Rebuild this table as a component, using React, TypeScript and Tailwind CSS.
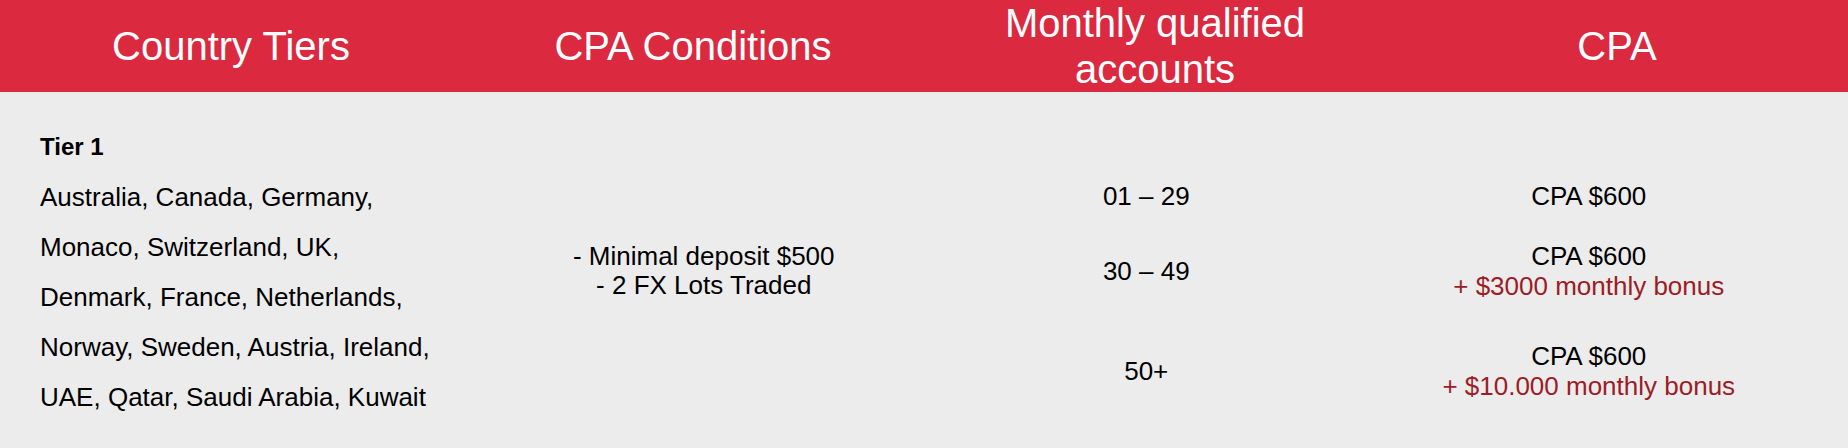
import React from 'react';

const headers: React.ReactNode[] = [
  'Country Tiers',
  'CPA Conditions',
  <>Monthly qualified<br />accounts</>,
  'CPA',
];

const countryLines = [
  'Australia, Canada, Germany,',
  'Monaco, Switzerland, UK,',
  'Denmark, France, Netherlands,',
  'Norway, Sweden, Austria, Ireland,',
  'UAE, Qatar, Saudi Arabia, Kuwait',
];

interface PayoutRow {
  accounts: string;
  cpa: string;
  bonus?: string;
  rowClass: string;
}

const payoutRows: PayoutRow[] = [
  { accounts: '01 – 29', cpa: 'CPA $600', rowClass: 'h-[30px]' },
  { accounts: '30 – 49', cpa: 'CPA $600', bonus: '+ $3000 monthly bonus', rowClass: 'h-[60px] mt-[30px]' },
  { accounts: '50+', cpa: 'CPA $600', bonus: '+ $10.000 monthly bonus', rowClass: 'h-[60px] mt-[40px]' },
];

const App: React.FC = () => {
  return (
    <div className="w-[1848px] h-[448px] bg-[#ececec] font-['Liberation_Sans',Arial,sans-serif] text-black">
      {/* Header bar */}
      <div className="grid grid-cols-4 h-[92px] bg-[#db2940] text-white text-[40px] leading-[46px]">
        {headers.map((h, i) => (
          <div key={i} className="flex items-center justify-center text-center">
            <span>{h}</span>
          </div>
        ))}
      </div>

      {/* Tier body */}
      <div className="grid grid-cols-4 pl-[40px] pr-[38px]">
        {/* Country list */}
        <div className="pt-[30px] pb-[26px] text-[26px] leading-[50px] whitespace-nowrap">
          <div className="text-[24px] font-bold">Tier 1</div>
          {countryLines.map((line) => (
            <div key={line}>{line}</div>
          ))}
        </div>

        {/* Conditions */}
        <div className="flex flex-col items-center justify-center pt-[2px] text-[26px] leading-[29px] text-center">
          <div>- Minimal deposit $500</div>
          <div>- 2 FX Lots Traded</div>
        </div>

        {/* Accounts + CPA rows */}
        <div className="col-span-2 flex flex-col pt-[89px] text-[26px] leading-[30px]">
          {payoutRows.map((row) => (
            <div key={row.accounts} className={`grid grid-cols-2 items-center text-center ${row.rowClass}`}>
              <div>{row.accounts}</div>
              <div>
                <div>{row.cpa}</div>
                {row.bonus && <div className="text-[#9b1d27]">{row.bonus}</div>}
              </div>
            </div>
          ))}
        </div>
      </div>
    </div>
  );
};

export default App;
